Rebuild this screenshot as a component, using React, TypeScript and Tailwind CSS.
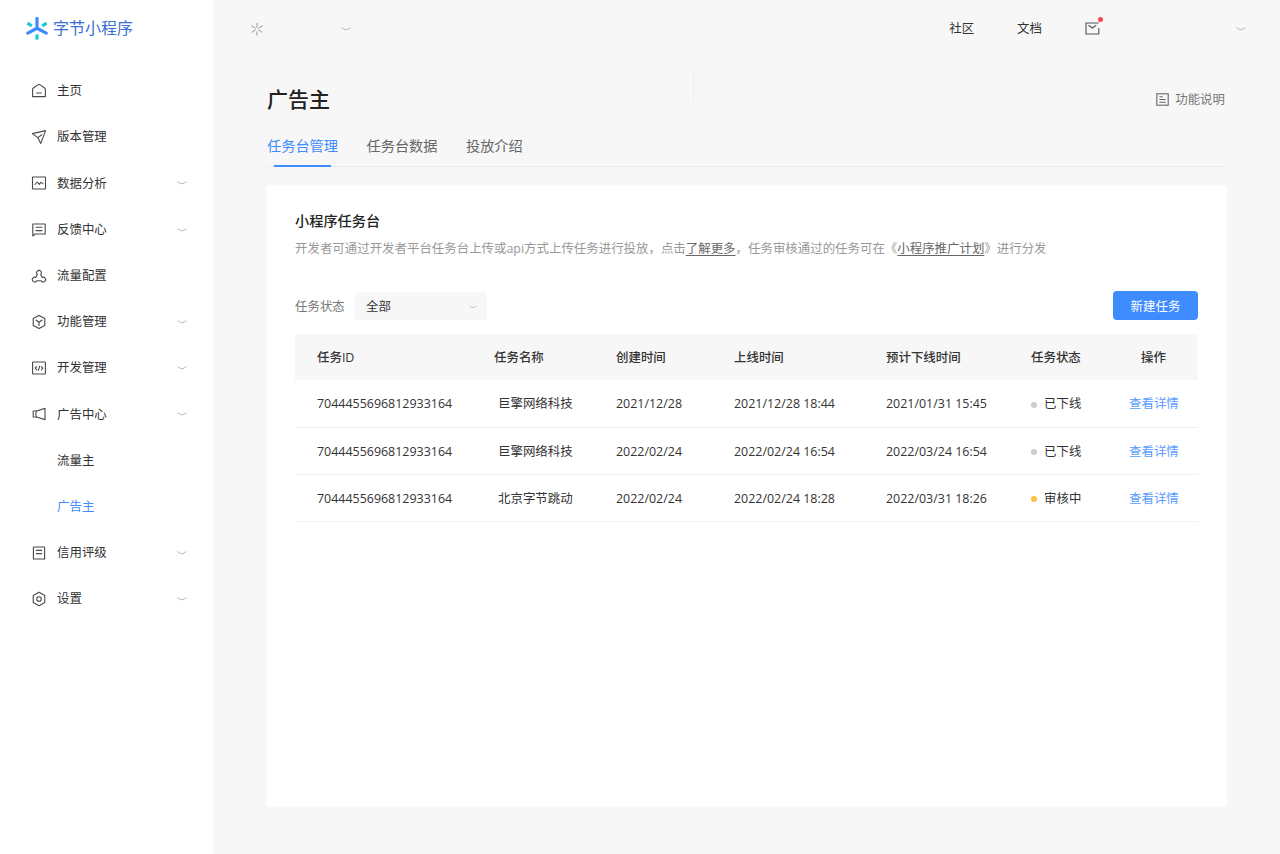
import React from "react";

type IconProps = { children: React.ReactNode };
const Ic = ({ children }: IconProps) => (
  <svg width="16" height="16" viewBox="0 0 16 16" fill="none" stroke="#4a4a4a" strokeWidth="1.1" strokeLinejoin="round" strokeLinecap="round" className="shrink-0">
    {children}
  </svg>
);
const Chevron = ({ className = "" }: { className?: string }) => (
  <svg width="10" height="6" viewBox="0 0 10 6" fill="none" stroke="#b0b0b0" strokeWidth="0.9" className={className}>
    <path d="M.5 1.6 Q3 3.4 5 3.9 Q7 3.4 9.5 1.6" />
  </svg>
);

const icons: Record<string, React.ReactNode> = {
  home: <><path d="M1.6 13.6V6.4Q1.6 5.6 2.4 5L6.8 1.9Q8 1.2 9.2 1.9L13.6 5Q14.4 5.6 14.4 6.4V13.6Z" /><path d="M5.6 10h4.8" /></>,
  send: <><path d="M1.4 4.6 14.6 1.6 9.8 14.4 6.8 8.6Z" /><path d="M6.8 8.6 10.8 5.8" /></>,
  chart: <><rect x="1.5" y="2" width="13" height="12" rx=".4" /><path d="M4 9.5 6.3 7l2 2.4 1.7-2 2 1.2" /></>,
  feedback: <><path d="M1.8 2h12.4v10H4.2l-2.4 2Z" /><path d="M5 5.2h6M5 8.6h6" /></>,
  flow: <><path d="M6.4 6.6a2.4 2.4 0 1 1 3.2 0L11.2 9.4a2.4 2.4 0 1 1-1 3.4H5.8a2.4 2.4 0 1 1-1-3.4Z" /></>,
  box: <><path d="M8 1.4 13.8 4.6V11.4L8 14.6 2.2 11.4V4.6Z" /><path d="M5 6 8 8.2 11 6M8 8.2V11.4" /></>,
  dev: <><rect x="1.6" y="2" width="12.8" height="12" rx=".4" /><path d="M5.6 6.6 4.2 8.2l1.4 1.6M10.4 6.6l1.4 1.6-1.4 1.6M8.7 6.2 7.3 10.2" /></>,
  ad: <><path d="M5.5 5 14 2.4M14 2.4V13.6M14 13.6 5.5 11" /><path d="M5.5 5H2.2v6h3.3Q3.8 8 5.5 5Z" /></>,
  credit: <><path d="M2.4 2H13.6V14H2.4Z" /><path d="M5.4 5.4h5.2M5.4 8.6h5.2" /></>,
  gear: <><path d="M8 1.3 13.8 4.6V11.4L8 14.7 2.2 11.4V4.6Z" /><circle cx="8" cy="8" r="2.3" /></>,
};

const nav = [
  ["home", "主页", false],
  ["send", "版本管理", false],
  ["chart", "数据分析", true],
  ["feedback", "反馈中心", true],
  ["flow", "流量配置", false],
  ["box", "功能管理", true],
  ["dev", "开发管理", true],
  ["ad", "广告中心", true],
] as const;

const Item = ({ icon, label, arrow }: { icon: string; label: string; arrow: boolean }) => (
  <div className="h-[46.2px] flex items-center pl-[31px] pr-[26px] text-[#333]">
    <Ic>{icons[icon]}</Ic>
    <span className="ml-[10px] flex-1 pt-[1px]">{label}</span>
    {arrow && <Chevron />}
  </div>
);

const Logo = () => (
  <svg width="22" height="23" viewBox="0 0 22 23" fill="none" className="shrink-0">
    <path d="M11 1.4V10" stroke="#3d8bff" strokeWidth="3.2" strokeLinecap="round" />
    <path d="M1.8 16.2 9.6 12" stroke="#3d8bff" strokeWidth="3.2" strokeLinecap="round" />
    <path d="M20.2 16.2 12.4 12" stroke="#3d8bff" strokeWidth="3.2" strokeLinecap="round" />
    <path d="M1.4 6.2 5.8 8.8" stroke="#17c9d6" strokeWidth="3.2" />
    <path d="M20.6 6.2 16.2 8.8" stroke="#17c9d6" strokeWidth="3.2" />
    <path d="M11 17.4V22.6" stroke="#17c9d6" strokeWidth="3.2" />
  </svg>
);

const rows = [
  ["7044455696812933164", "巨擎网络科技", "2021/12/28", "2021/12/28 18:44", "2021/01/31 15:45", "已下线", "bg-[#cccccc]"],
  ["7044455696812933164", "巨擎网络科技", "2022/02/24", "2022/02/24 16:54", "2022/03/24 16:54", "已下线", "bg-[#cccccc]"],
  ["7044455696812933164", "北京字节跳动", "2022/02/24", "2022/02/24 18:28", "2022/03/31 18:26", "审核中", "bg-[#ffc043]"],
];

export default function App() {
  return (
    <div className="flex w-[1280px] h-[854px] overflow-hidden bg-[#f7f7f7] text-[12.44px] font-['Open_Sans','Noto_Sans_CJK_SC',sans-serif]">
      <aside className="w-[213px] shrink-0 bg-white">
        <div className="h-[68px] flex items-center pl-[26px] pb-[12px]">
          <Logo />
          <span className="ml-[5px] text-[16px] text-[#3b6fd4]">字节小程序</span>
        </div>
        {nav.map(([i, l, a]) => <Item key={l} icon={i} label={l} arrow={a} />)}
        <div className="h-[46.2px] flex items-center pl-[57px] pt-[2px] text-[#333]">流量主</div>
        <div className="h-[46.2px] flex items-center pl-[57px] pt-[2px] text-[#3f8cff]">广告主</div>
        <Item icon="credit" label="信用评级" arrow />
        <Item icon="gear" label="设置" arrow />
      </aside>

      <main className="flex-1 min-w-0 relative pl-[54px] pr-[53px]">
        <header className="h-[57px] flex items-center -ml-[17px] -mr-[19px]">
          <svg width="14" height="14" viewBox="0 0 14 14" stroke="#999" strokeWidth="1" fill="none"><path d="M7 .8v5M1.2 3.6 5.6 6.4M12.8 3.6 8.4 6.4M5.8 7.8 1.8 10.4M8.2 7.8l4 2.6M7 9.4v4" /></svg>
          <Chevron className="ml-[77px]" />
          <span className="ml-auto pt-[2px] text-[#333]">社区</span>
          <span className="ml-[43px] pt-[2px] text-[#333]">文档</span>
          <span className="relative ml-[43px] w-[16px] h-[16px]">
            <svg width="15" height="13" viewBox="0 0 15 13" fill="none" stroke="#555" strokeWidth="1.1" className="absolute left-0 top-[1px]">
              <path d="M13.8 6v6H1V1h12.8" /><path d="M3.5 3.2 7.4 6l3.8-2.8" />
            </svg>
            <span className="absolute left-[13px] -top-[4px] w-[5px] h-[5px] rounded-full bg-[#f54a45]" />
          </span>
          <Chevron className="ml-[135px]" />
        </header>

        <div className="flex items-center justify-between h-[38px] mt-[23px]">
          <h1 className="text-[21px] font-medium text-[#222] leading-[28px]">广告主</h1>
          <div className="flex items-center text-[#777] pr-[2px]">
            <svg width="13" height="13" viewBox="0 0 13 13" fill="none" stroke="#666" strokeWidth="1.1"><rect x=".8" y=".8" width="11.4" height="11.4" /><path d="M3.4 3.8h3.4M3.4 6.5h6.2M3.4 9.2h6.2" /></svg>
            <span className="ml-[6px] pt-[2px]">功能说明</span>
          </div>
        </div>
        <div className="absolute left-[480px] top-[70px] w-px h-[33px] bg-[#f0f0f0]" />

        <nav className="flex mt-[13px] h-[36px] border-b border-[#ebebeb] text-[14.2px] leading-[20px] pt-[5px] text-[#666]">
          <div className="relative text-[#3f8cff] w-[71px]">任务台管理<span className="absolute left-[7px] right-[7px] -bottom-px h-[2px] bg-[#3f8cff]" /></div>
          <div className="ml-[28.5px]">任务台数据</div>
          <div className="ml-[28.5px]">投放介绍</div>
        </nav>

        <section className="mt-[18px] h-[622px] bg-white rounded-[4px] pl-[28px] pr-[29px] pt-[26px]">
          <h2 className="text-[14.2px] leading-[20px] font-medium text-[#222]">小程序任务台</h2>
          <p className="mt-[8px] leading-[20px] text-[#999]">
            开发者可通过开发者平台任务台上传或api方式上传任务进行投放，点击<span className="underline underline-offset-2 text-[#666]">了解更多</span>，任务审核通过的任务可在《<span className="underline underline-offset-2 text-[#666]">小程序推广计划</span>》进行分发
          </p>
          <div className="flex items-center justify-between mt-[32px] h-[29px]">
            <div className="flex items-center">
              <span className="text-[#777] w-[60px] pt-[3px]">任务状态</span>
              <div className="w-[132px] h-[28px] bg-[#f7f7f7] rounded-[4px] flex items-center justify-between pl-[11px] pr-[9px] pt-[3px] text-[#333]">全部<Chevron className="scale-75" /></div>
            </div>
            <button className="w-[85px] h-[29px] bg-[#3f8cff] rounded-[4px] pt-[3px] text-white">新建任务</button>
          </div>
          <table className="w-full mt-[14px] table-fixed text-left text-[#333]">
            <thead>
              <tr className="h-[46px] bg-[#f7f7f7] text-[#333]">
                <th className="w-[199px] pl-[22px] pt-[2px] font-medium">任务ID</th>
                <th className="w-[122px] pt-[2px] font-medium">任务名称</th>
                <th className="w-[118px] pt-[2px] font-medium">创建时间</th>
                <th className="w-[152px] pt-[2px] font-medium">上线时间</th>
                <th className="w-[145px] pt-[2px] font-medium">预计下线时间</th>
                <th className="w-[98px] pt-[2px] font-medium">任务状态</th>
                <th className="font-medium pt-[2px] pl-[12px]">操作</th>
              </tr>
            </thead>
            <tbody>
              {rows.map((r, idx) => (
                <tr key={idx} className="h-[47px] border-b border-[#f0f0f0]">
                  <td className="pl-[22px] pt-[3px]">{r[0]}</td>
                  <td className="pl-[4px] pt-[3px]">{r[1]}</td>
                  <td className="pt-[3px]">{r[2]}</td>
                  <td className="pt-[3px]">{r[3]}</td>
                  <td className="pt-[3px]">{r[4]}</td>
                  <td className="pt-[3px]">
                    <span className="flex items-center">
                      <span className={`w-[6px] h-[6px] rounded-full mr-[7px] ${r[6]}`} />{r[5]}
                    </span>
                  </td>
                  <td className="pt-[3px] text-[#5b9cff]">查看详情</td>
                </tr>
              ))}
            </tbody>
          </table>
        </section>
      </main>
    </div>
  );
}
